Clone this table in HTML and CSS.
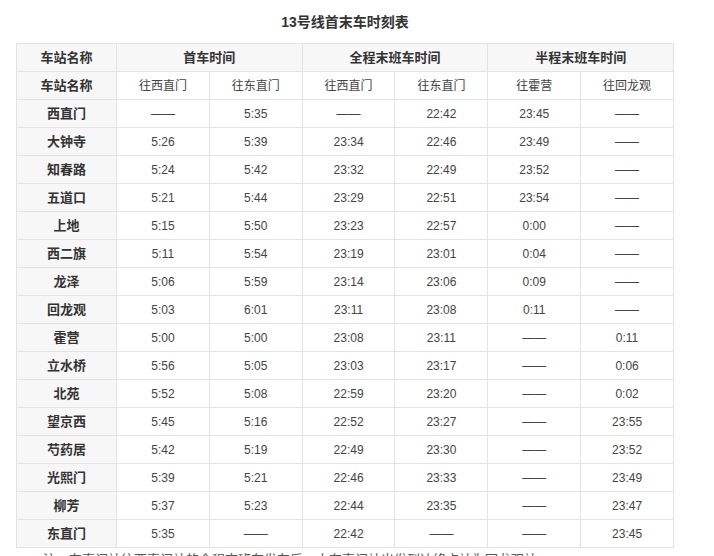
FILE: index.html
```html
<!DOCTYPE html>
<html lang="zh">
<head>
<meta charset="utf-8">
<link rel="stylesheet" href="styles.css">
</head>
<body>
<div class="page">
  <h1 class="title">13号线首末车时刻表</h1>
  <table class="tt">
    <colgroup>
      <col class="c-st"><col><col><col><col><col><col>
    </colgroup>
    <tr class="hd">
      <th>车站名称</th>
      <th colspan="2">首车时间</th>
      <th colspan="2">全程末班车时间</th>
      <th colspan="2">半程末班车时间</th>
    </tr>
    <tr class="sub">
      <th>车站名称</th>
      <td>往西直门</td><td>往东直门</td><td>往西直门</td><td>往东直门</td><td>往霍营</td><td>往回龙观</td>
    </tr>
    <tr><th>西直门</th><td>——</td><td>5:35</td><td>——</td><td>22:42</td><td>23:45</td><td>——</td></tr>
    <tr><th>大钟寺</th><td>5:26</td><td>5:39</td><td>23:34</td><td>22:46</td><td>23:49</td><td>——</td></tr>
    <tr><th>知春路</th><td>5:24</td><td>5:42</td><td>23:32</td><td>22:49</td><td>23:52</td><td>——</td></tr>
    <tr><th>五道口</th><td>5:21</td><td>5:44</td><td>23:29</td><td>22:51</td><td>23:54</td><td>——</td></tr>
    <tr><th>上地</th><td>5:15</td><td>5:50</td><td>23:23</td><td>22:57</td><td>0:00</td><td>——</td></tr>
    <tr><th>西二旗</th><td>5:11</td><td>5:54</td><td>23:19</td><td>23:01</td><td>0:04</td><td>——</td></tr>
    <tr><th>龙泽</th><td>5:06</td><td>5:59</td><td>23:14</td><td>23:06</td><td>0:09</td><td>——</td></tr>
    <tr><th>回龙观</th><td>5:03</td><td>6:01</td><td>23:11</td><td>23:08</td><td>0:11</td><td>——</td></tr>
    <tr><th>霍营</th><td>5:00</td><td>5:00</td><td>23:08</td><td>23:11</td><td>——</td><td>0:11</td></tr>
    <tr><th>立水桥</th><td>5:56</td><td>5:05</td><td>23:03</td><td>23:17</td><td>——</td><td>0:06</td></tr>
    <tr><th>北苑</th><td>5:52</td><td>5:08</td><td>22:59</td><td>23:20</td><td>——</td><td>0:02</td></tr>
    <tr><th>望京西</th><td>5:45</td><td>5:16</td><td>22:52</td><td>23:27</td><td>——</td><td>23:55</td></tr>
    <tr><th>芍药居</th><td>5:42</td><td>5:19</td><td>22:49</td><td>23:30</td><td>——</td><td>23:52</td></tr>
    <tr><th>光熙门</th><td>5:39</td><td>5:21</td><td>22:46</td><td>23:33</td><td>——</td><td>23:49</td></tr>
    <tr><th>柳芳</th><td>5:37</td><td>5:23</td><td>22:44</td><td>23:35</td><td>——</td><td>23:47</td></tr>
    <tr><th>东直门</th><td>5:35</td><td>——</td><td>22:42</td><td>——</td><td>——</td><td>23:45</td></tr>
  </table>
  <p class="note">注：东直门站往西直门站的全程末班车发车后，由东直门站出发到达终点站为回龙观站。</p>
</div>
</body>
</html>
```
FILE: styles.css
```css
html, body {
  margin: 0;
  padding: 0;
  background: #fff;
}
body {
  font-family: "Liberation Sans", Arial, "Noto Sans CJK SC", sans-serif;
  color: #333;
}
.page {
  padding: 0 0 0 16px;
  width: 658px;
}
.title {
  margin: 0;
  padding-top: 14px;
  height: 43px;
  box-sizing: border-box;
  text-align: center;
  font-size: 14px;
  line-height: 16px;
  font-weight: bold;
  color: #333;
}
.tt {
  border-collapse: collapse;
  width: 658px;
  table-layout: fixed;
  font-size: 12px;
}
.c-st {
  width: 100px;
}
.tt th, .tt td {
  border: 1px solid #e3e3e3;
  height: 27px;
  padding: 0;
  text-align: center;
  vertical-align: middle;
  line-height: 16px;
}
.tt th {
  background: #f7f7f7;
  font-weight: bold;
  font-size: 13px;
  color: #333;
}
.tt td {
  color: #444;
}
.note {
  margin: 4px 0 0 27px;
  font-size: 13px;
  line-height: 16px;
  white-space: nowrap;
  color: #555;
}
```
